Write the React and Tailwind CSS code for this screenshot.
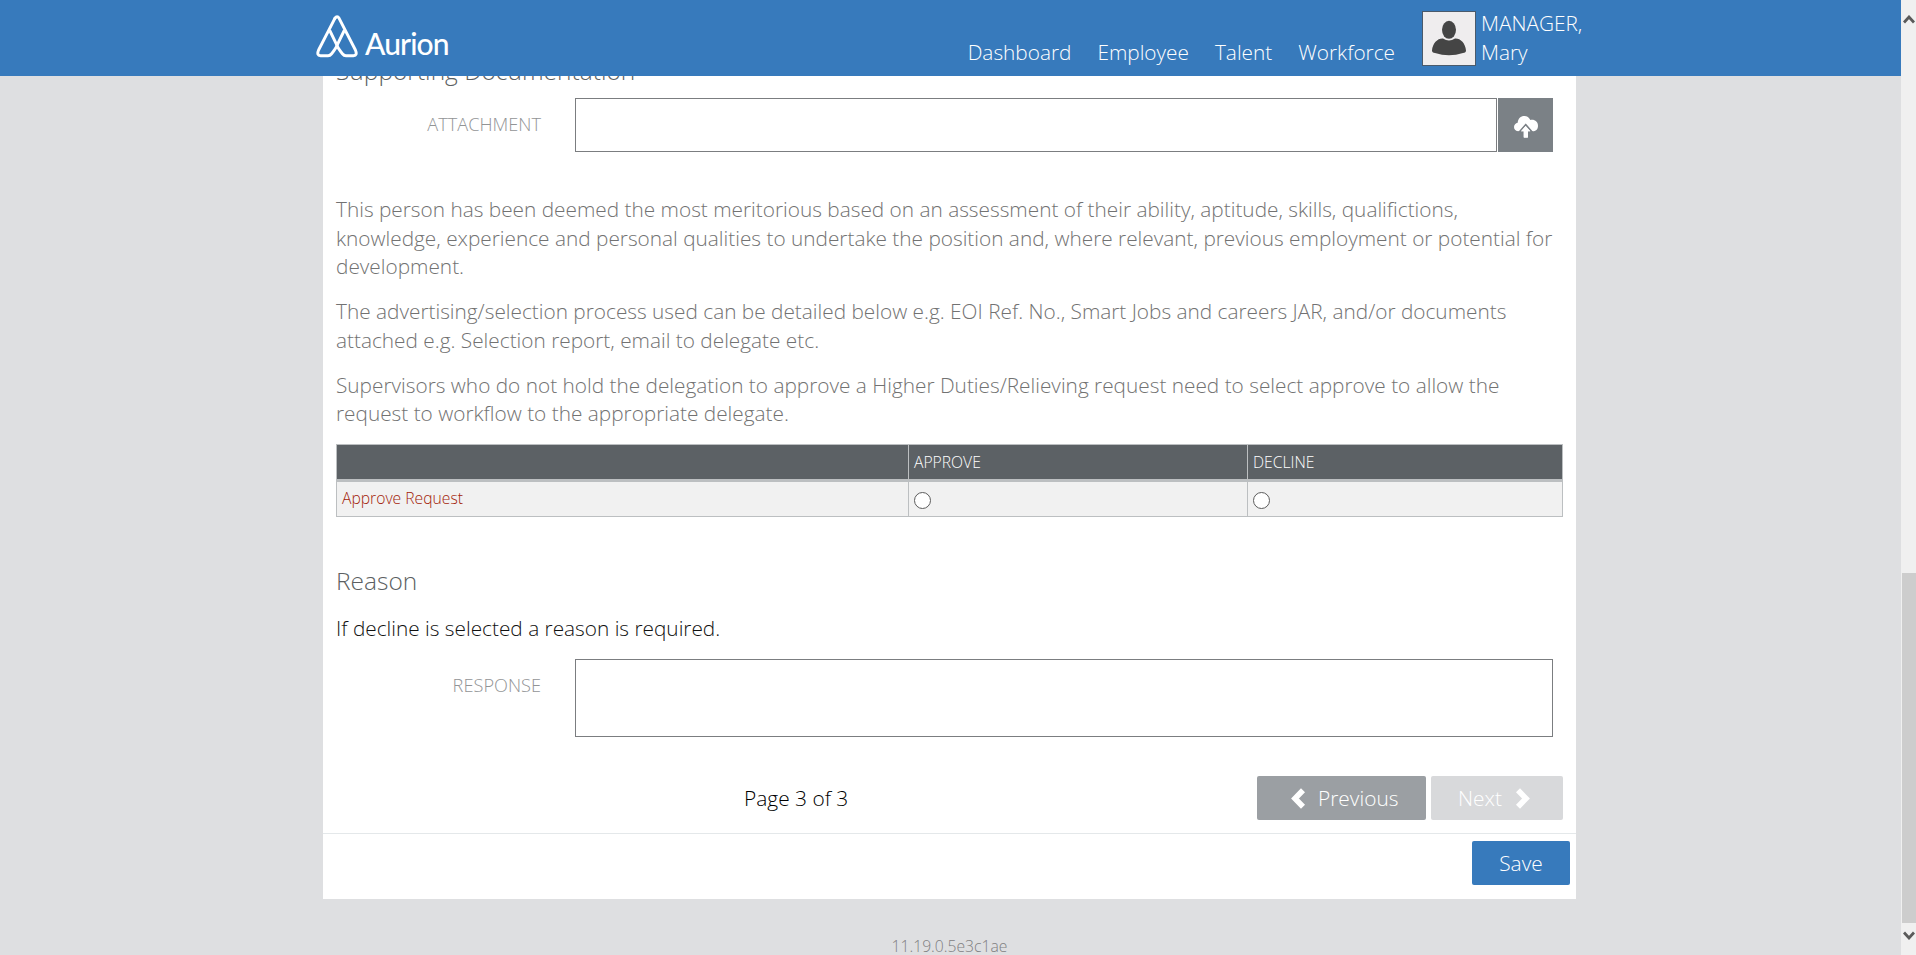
import React from "react";

const NAV = ["Dashboard", "Employee", "Talent", "Workforce"];

function Logo() {
  return (
    <div className="flex items-start pt-[15px]">
      <svg width="42" height="43" viewBox="0 0 129 129" preserveAspectRatio="none" fill="none" stroke="#fff" strokeWidth="9" strokeLinejoin="round" strokeLinecap="round">
        <path d="M58 10 L8 105 Q1 122 14 122 H37 Q43 122 48 116 Q62 100 66 88 L86 48" />
        <path d="M58 10 Q65 0 71 10 L121 105 Q128 122 115 122 H92 Q86 122 81 116 Q67 100 63 88 L43 48" />
      </svg>
      <span className="ml-[7px] mt-[10px] font-['Lato',sans-serif] text-[30px] font-medium leading-[36px] tracking-[-0.9px] text-white">
        Aurion
      </span>
    </div>
  );
}

function Header() {
  return (
    <header className="flex h-[76px] shrink-0 bg-[#377abc] pl-[316px] text-[20.8px] leading-[28.5px] text-white">
      <Logo />
      <nav className="ml-auto flex gap-[26px] pt-[38px]">
        {NAV.map((item) => (
          <a key={item}>{item}</a>
        ))}
      </nav>
      <div className="ml-[27px] flex w-[479px] gap-[5px]">
        <div className="mt-[11px] h-[55px] w-[54px] border border-[#4a5a6b] bg-[#efedee]">
          <svg width="52" height="53" viewBox="0 0 52 53" fill="#454545">
            <ellipse cx="26" cy="17.8" rx="7" ry="9" />
            <path d="M9 38.5 C9.500 31 15 26 20 26.500 Q26 30.500 32 26.500 C37 26 42.500 31 43 38.500 Q43 40.500 40 41 Q26 45.500 12 41 Q9 40.500 9 38.500Z" />
          </svg>
        </div>
        <div className="pt-[9px]">
          <div>MANAGER,</div>
          <div>Mary</div>
        </div>
      </div>
    </header>
  );
}

function CloudUpload() {
  return (
    <svg width="24" height="22" viewBox="0 0 72 66">
      <path fill="#fff" d="M15 46 C5 46 0 40 0 33 C0 26 5 21 11 20 C12 8 20 0 31 0 C39 0 46 5 49 12 C62 9 72 18 72 29 C72 40 65 46 56 46 Z" />
      <path fill="#fff" stroke="#7b8186" strokeWidth="5" d="M35 26 L54 48 H44 V68 H27 V48 H16 Z" />
      <path fill="#fff" d="M35 30 L49 46 H42 V64 H29 V46 H21 Z" />
    </svg>
  );
}

function Chevron({ flip }) {
  return (
    <svg width="15" height="21" viewBox="0 0 15 21" className={flip ? "rotate-180" : ""}>
      <path d="M12 2.300 L4 10.500 L12 18.700" fill="none" stroke="#fff" strokeWidth="5.600" />
    </svg>
  );
}

function Radio() {
  return <span className="mt-[3px] block size-[17px] rounded-full border border-[#5c5c5c] bg-white" />;
}

function FieldRow({ label, children }) {
  return (
    <div className="flex">
      <label className="w-[205px] text-right text-[18.2px] leading-[52px] text-[#929496]">{label}</label>
      <div className="ml-[34px] flex gap-px">{children}</div>
    </div>
  );
}

function ApprovalTable() {
  return (
    <div className="w-[1227px] border border-[#bcbfc1] text-[15.7px]">
      <div className="grid h-[37px] grid-cols-[571px_339px_315px] border-b-[3px] border-[#bcbfc1] bg-[#5c6165] leading-[34px] text-white">
        <div />
        <div className="border-l border-[#bcbfc1] pl-[5px]">APPROVE</div>
        <div className="border-l border-[#bcbfc1] pl-[5px]">DECLINE</div>
      </div>
      <div className="grid h-[34px] grid-cols-[571px_339px_315px] bg-[#f1f1f1]">
        <div className="pl-[5px] leading-[32px] text-[#a32208]">Approve Request</div>
        <div className="flex items-center border-l border-[#bcbfc1] pl-[5px]"><Radio /></div>
        <div className="flex items-center border-l border-[#bcbfc1] pl-[5px]"><Radio /></div>
      </div>
    </div>
  );
}

function Scrollbar() {
  return (
    <div className="flex w-[15px] shrink-0 flex-col items-end bg-[#f0f0f0]">
      <div className="flex h-[573px] w-[14px] justify-center pt-[15px]">
        <svg width="12" height="9" viewBox="0 0 12 9"><path d="M1 7.500 L6 2 L11 7.500" fill="none" stroke="#5a5a5a" strokeWidth="2.800" /></svg>
      </div>
      <div className="h-[350px] w-[14px] bg-[#cdcdcd]" />
      <div className="flex w-[14px] justify-center pt-[8px]">
        <svg width="12" height="9" viewBox="0 0 12 9"><path d="M1 1.500 L6 7 L11 1.500" fill="none" stroke="#5a5a5a" strokeWidth="2.800" /></svg>
      </div>
    </div>
  );
}

export default function App() {
  return (
    <div className="flex h-[955px] w-[1916px] overflow-hidden font-['Open_Sans',sans-serif] font-light">
      <div className="flex w-[1901px] flex-col overflow-hidden bg-[#dedfe1]">
        <Header />
        <main className="ml-[323px] h-[823px] w-[1253px] shrink-0 overflow-hidden bg-white">
          <div className="pl-[13px]">
            <h2 className="-mt-[22px] h-[34px] text-[24.5px] leading-[34px] text-[#5c5f62]">Supporting Documentation</h2>
            <div className="mt-[10px]">
              <FieldRow label="ATTACHMENT">
                <div className="h-[54px] w-[922px] border border-[#7b7d80] bg-white" />
                <button className="flex h-[54px] w-[55px] items-center justify-center bg-[#7b8186] pt-[4px]"><CloudUpload /></button>
              </FieldRow>
            </div>
            <div className="mt-[43px] flex h-[233px] flex-col gap-[16.5px] whitespace-nowrap text-[20.8px] leading-[28.5px] text-[#727272]">
              <p>
                This person has been deemed the most meritorious based on an assessment of their ability, aptitude, skills, qualifictions,<br />
                knowledge, experience and personal qualities to undertake the position and, where relevant, previous employment or potential for<br />
                development.
              </p>
              <p>
                The advertising/selection process used can be detailed below e.g. EOI Ref. No., Smart Jobs and careers JAR, and/or documents<br />
                attached e.g. Selection report, email to delegate etc.
              </p>
              <p>
                Supervisors who do not hold the delegation to approve a Higher Duties/Relieving request need to select approve to allow the<br />
                request to workflow to the appropriate delegate.
              </p>
            </div>
            <div className="mt-[16px]"><ApprovalTable /></div>
            <h2 className="mt-[46px] h-[35px] text-[24.5px] leading-[35px] text-[#5c5f62]">Reason</h2>
            <p className="mt-[16px] h-[28px] text-[20.8px] leading-[28px] text-[#111]">If decline is selected a reason is required.</p>
            <div className="mt-[17px]">
              <FieldRow label="RESPONSE">
                <div className="h-[78px] w-[978px] border border-[#7b7d80] bg-white" />
              </FieldRow>
            </div>
            <div className="mt-[39px] flex h-[44px] pr-[13px] text-[20.9px] leading-[44px]">
              <span className="ml-[408px] text-black">Page 3 of 3</span>
              <button className="ml-auto flex w-[169px] items-center rounded-[2px] bg-[#9b9fa3] pl-[34px] text-white">
                <Chevron />
                <span className="ml-[12px]">Previous</span>
              </button>
              <button className="ml-[5px] flex w-[132px] items-center rounded-[2px] bg-[#d8d9db] pl-[27px] text-white">
                <span>Next</span>
                <span className="ml-[13px]"><Chevron flip /></span>
              </button>
            </div>
          </div>
          <div className="mt-[13px] flex justify-end border-t border-[#e4e8ea] pr-[6px] pt-[7px]">
            <button className="h-[44px] w-[98px] rounded-[2px] bg-[#377abc] text-[20.9px] leading-[44px] text-white">Save</button>
          </div>
        </main>
        <footer className="ml-[323px] mt-[38px] w-[1253px] text-center text-[15.7px] leading-[18px] text-[#7e8081]">11.19.0.5e3c1ae</footer>
      </div>
      <Scrollbar />
    </div>
  );
}
